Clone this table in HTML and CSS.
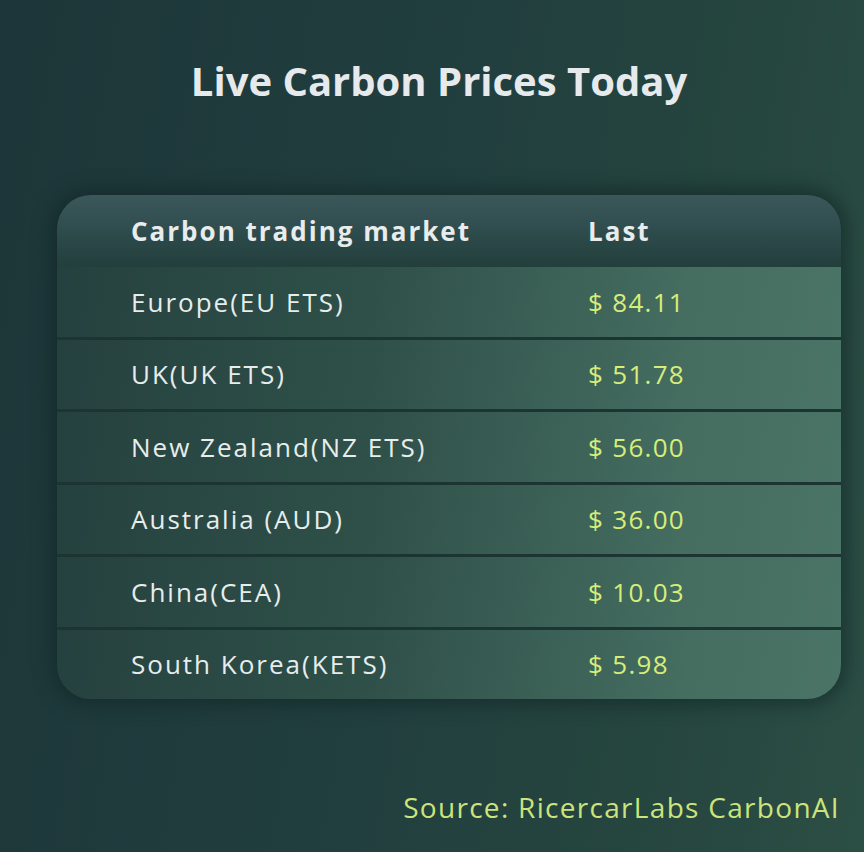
FILE: index.html
```html
<!DOCTYPE html>
<html lang="en">
<head>
<meta charset="utf-8">
<title>Live Carbon Prices Today</title>
<link rel="stylesheet" href="styles.css">
</head>
<body>
<main class="page">
  <h1 class="title">Live Carbon Prices Today</h1>
  <section class="card">
    <div class="head">
      <span class="c1">Carbon trading market</span>
      <span class="c2">Last</span>
    </div>
    <div class="rows">
      <div class="row"><span class="c1">Europe(EU ETS)</span><span class="c2 price">$ 84.11</span></div>
      <div class="row"><span class="c1">UK(UK ETS)</span><span class="c2 price">$ 51.78</span></div>
      <div class="row"><span class="c1">New Zealand(NZ ETS)</span><span class="c2 price">$ 56.00</span></div>
      <div class="row"><span class="c1">Australia (AUD)</span><span class="c2 price">$ 36.00</span></div>
      <div class="row"><span class="c1">China(CEA)</span><span class="c2 price">$ 10.03</span></div>
      <div class="row last"><span class="c1">South Korea(KETS)</span><span class="c2 price">$ 5.98</span></div>
    </div>
  </section>
  <p class="source">Source: RicercarLabs CarbonAI</p>
</main>
</body>
</html>
```
FILE: styles.css
```css
html, body {
  margin: 0;
  padding: 0;
}
body {
  width: 864px;
  height: 852px;
  overflow: hidden;
  font-family: "Open Sans", "Noto Sans", sans-serif;
  background: linear-gradient(100deg, #1d3639 0%, #213e3e 45%, #26463f 80%, #2c4f45 100%);
  color: #e4eae9;
}
.page {
  display: flex;
  flex-direction: column;
  height: 852px;
}
.title {
  margin: 53px 0 0 0;
  padding-left: 14px;
  text-align: center;
  font-size: 40px;
  font-weight: 700;
  line-height: 56px;
  color: #e6eaec;
  letter-spacing: 0;
}
.card {
  margin: 86px 23px 0 57px;
  border-radius: 34px;
  overflow: hidden;
  background: #1c3432;
  box-shadow: 0 0 18px 6px rgba(14, 34, 34, 0.55);
}
.head {
  height: 72px;
  display: grid;
  grid-template-columns: 457px 1fr;
  align-items: center;
  padding-left: 74px;
  background: linear-gradient(180deg, #3b575a 0%, #304d4f 45%, #223f3c 100%);
  font-weight: 700;
  font-size: 26px;
  letter-spacing: 2px;
  color: #e8eced;
}
.rows {
  display: flex;
  flex-direction: column;
  gap: 3px;
}
.row {
  height: 69.5px;
  display: grid;
  grid-template-columns: 457px 1fr;
  align-items: center;
  padding-left: 74px;
  background: linear-gradient(100deg, #25413f 0%, #2f5049 40%, #456d60 80%, #4a7465 100%);
  font-size: 26px;
  font-weight: 400;
  letter-spacing: 2px;
  color: #e7edec;
}
.price {
  color: #d6ee79;
  letter-spacing: 1.3px;
}
.source {
  margin: 89px 24px 0 0;
  text-align: right;
  font-size: 28px;
  font-weight: 400;
  letter-spacing: 1.3px;
  color: #cbe47b;
}
```
